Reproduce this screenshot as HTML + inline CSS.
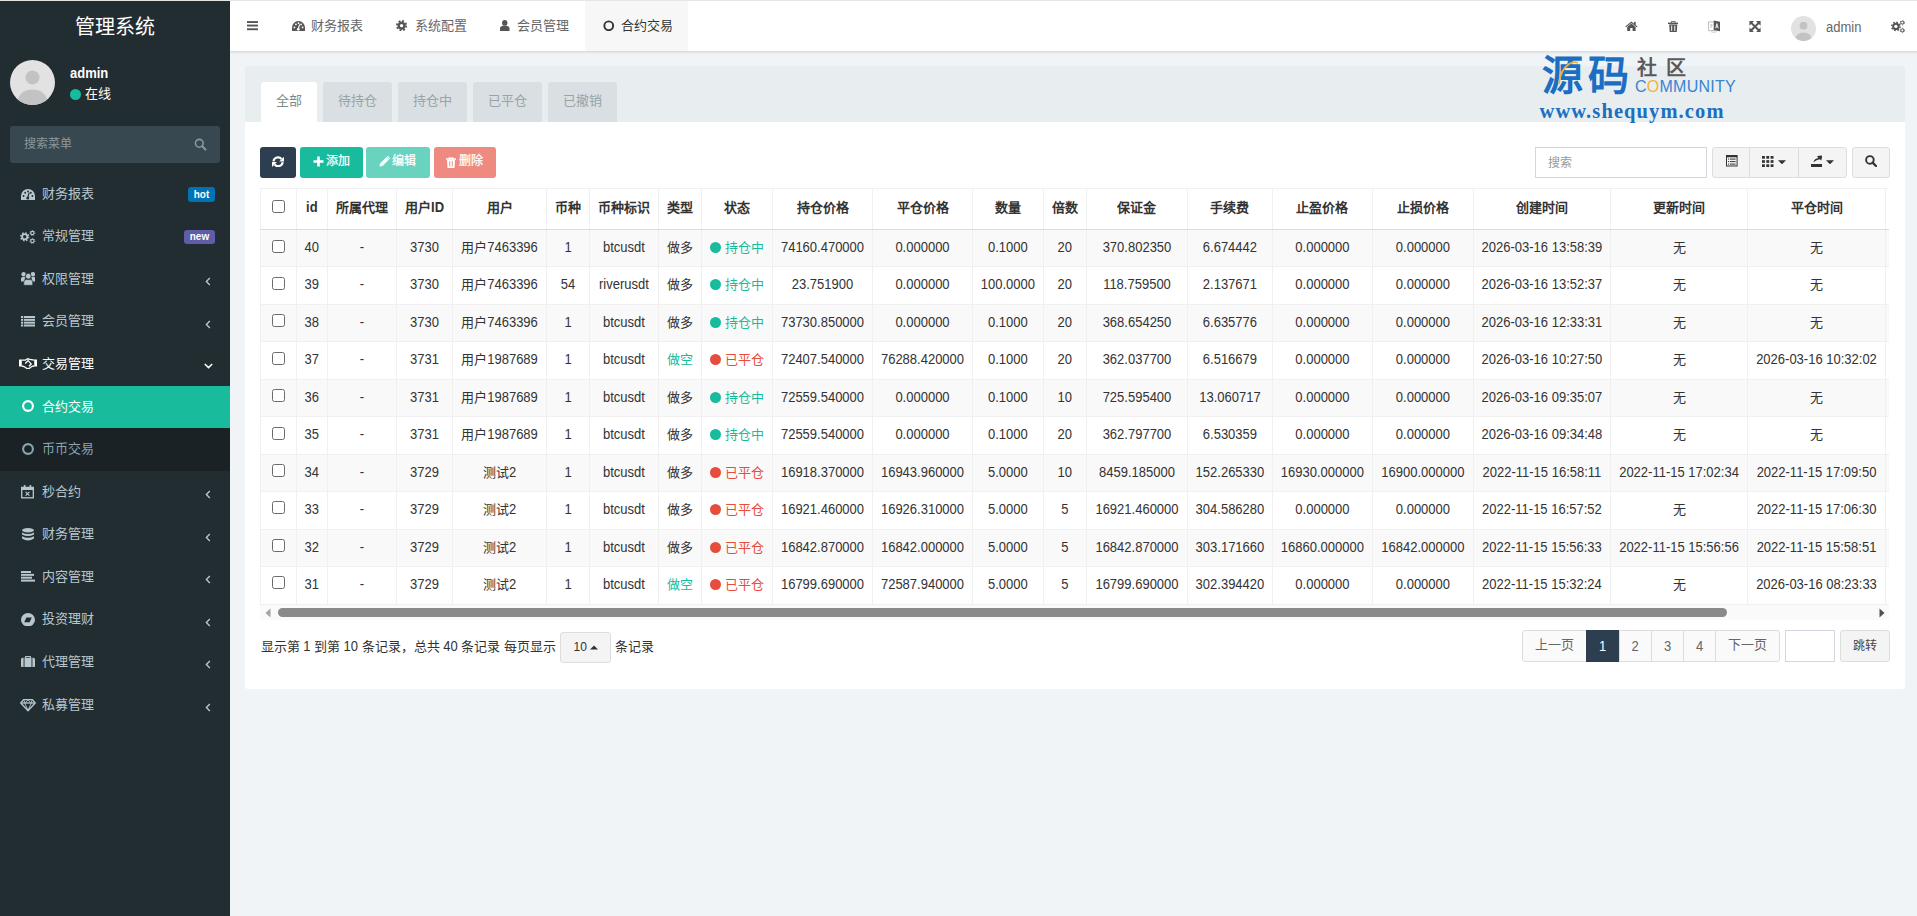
<!DOCTYPE html><html lang="zh-CN"><head><meta charset="utf-8"><style>
*{box-sizing:border-box;margin:0;padding:0}
html,body{width:1917px;height:916px;overflow:hidden}
body{position:relative;background:#f1f4f6;font-family:"Liberation Sans",sans-serif;font-size:13px;color:#333}
.abs{position:absolute}
.tx{position:absolute;white-space:nowrap}
</style></head><body><div class="abs" style="left:0;top:0;width:1917px;height:1px;background:#e4e6e4"></div>
<div class="abs" style="left:0;top:1px;width:230px;height:915px;background:#222d32"></div>
<div class="tx" style="left:0;top:1.5px;width:230px;height:50px;line-height:50px;text-align:center;color:#fff;font-size:20px">管理系统</div>
<svg class="abs" style="left:10px;top:60px" width="45" height="45" viewBox="0 0 45 45"><defs><clipPath id="av"><circle cx="22.5" cy="22.5" r="22.5"/></clipPath></defs><g clip-path="url(#av)"><rect width="45" height="45" fill="#e2e2e2"/><circle cx="22.5" cy="17.5" r="7" fill="#c3c3c3"/><ellipse cx="22.5" cy="40.5" rx="14.5" ry="11" fill="#c3c3c3"/></g></svg>
<div class="tx" style="left:70px;top:65.6px;color:#fff;font-weight:bold;font-size:13px;line-height:16px"><span style="display:inline-block;transform:scaleY(1.1);transform-origin:50% 68%">admin</span></div>
<div class="abs" style="left:70px;top:89px;width:11px;height:11px;border-radius:50%;background:#18bc9c"></div>
<div class="tx" style="left:85px;top:86px;color:#fff;font-size:13px;line-height:16px">在线</div>
<div class="abs" style="left:10px;top:126px;width:210px;height:36.7px;background:#374850;border-radius:3px"></div>
<div class="tx" style="left:24px;top:126.3px;line-height:36px;color:#8b989e;font-size:12px">搜索菜单</div>
<svg class="abs" style="left:194px;top:138px" width="13" height="13" viewBox="0 0 13 13"><circle cx="5.3" cy="5.3" r="3.9" fill="none" stroke="#8b989e" stroke-width="1.6"/><path d="M8.2 8.2 L11.5 11.5" stroke="#8b989e" stroke-width="2" stroke-linecap="round"/></svg>
<svg class="abs" style="left:21px;top:188.88px" width="14" height="11" viewBox="0 0 14 11"><path d="M0 11 L0 7 A7 7 0 0 1 14 7 L14 11 Z" fill="#b8c7ce"/><circle cx="2.6" cy="7" r="0.95" fill="#222d32"/><circle cx="4.2" cy="3.7" r="0.95" fill="#222d32"/><circle cx="7" cy="2.4" r="0.95" fill="#222d32"/><circle cx="9.8" cy="3.7" r="0.95" fill="#222d32"/><circle cx="11.4" cy="7" r="0.95" fill="#222d32"/><path d="M6.6 9.2 L8.2 3.6" stroke="#222d32" stroke-width="1.2"/><circle cx="6.8" cy="9" r="1.5" fill="#222d32"/></svg>
<div class="tx" style="left:42px;top:172.70px;height:42.57px;line-height:42.57px;color:#b8c7ce;font-size:13px">财务报表</div>
<div class="tx" style="left:188px;top:187px;width:27px;height:15px;line-height:15px;border-radius:3px;background:#0073b7;color:#fff;font-weight:bold;font-size:10px;text-align:center"><span style="display:inline-block;transform:scaleY(1.12);transform-origin:50% 68%">hot</span></div>
<svg class="abs" style="left:20.2px;top:229.50px" width="16" height="14.2" viewBox="0 0 16 14.2"><circle cx="4.7" cy="6.8" r="3.48" fill="#b8c7ce"/><circle cx="4.7" cy="6.8" r="3.95" fill="none" stroke="#b8c7ce" stroke-width="1.50" stroke-dasharray="1.550 1.550"/><circle cx="4.7" cy="6.8" r="1.69" fill="#222d32"/><circle cx="12.4" cy="2.95" r="2.18" fill="#b8c7ce"/><circle cx="12.4" cy="2.95" r="2.48" fill="none" stroke="#b8c7ce" stroke-width="0.94" stroke-dasharray="1.112 1.112"/><circle cx="12.4" cy="2.95" r="1.06" fill="#222d32"/><circle cx="12.4" cy="10.9" r="2.18" fill="#b8c7ce"/><circle cx="12.4" cy="10.9" r="2.48" fill="none" stroke="#b8c7ce" stroke-width="0.94" stroke-dasharray="1.112 1.112"/><circle cx="12.4" cy="10.9" r="1.06" fill="#222d32"/></svg>
<div class="tx" style="left:42px;top:215.27px;height:42.57px;line-height:42.57px;color:#b8c7ce;font-size:13px">常规管理</div>
<div class="tx" style="left:184px;top:230px;width:31px;height:14px;line-height:14px;border-radius:3px;background:#605ca8;color:#fff;font-weight:bold;font-size:10px;text-align:center"><span style="display:inline-block;transform:scaleY(1.12);transform-origin:50% 68%">new</span></div>
<svg class="abs" style="left:20.7px;top:272.23px" width="14.5" height="13.3" viewBox="0 0 14.5 13.3"><circle cx="2.6" cy="2.3" r="2.2" fill="#b8c7ce"/><circle cx="11.9" cy="2.3" r="2.2" fill="#b8c7ce"/><path d="M0 9.5 L0 6.5 Q0 5 1.6 5 L4.2 5 L3.2 9.5 Z" fill="#b8c7ce"/><path d="M14.5 9.5 L14.5 6.5 Q14.5 5 12.9 5 L10.3 5 L11.3 9.5 Z" fill="#b8c7ce"/><circle cx="7.25" cy="4.2" r="2.9" fill="#b8c7ce" stroke="#222d32" stroke-width="0.8"/><path d="M2.8 13.3 L2.8 10.2 Q2.8 7.6 5.2 7.6 L9.3 7.6 Q11.7 7.6 11.7 10.2 L11.7 13.3 Z" fill="#b8c7ce" stroke="#222d32" stroke-width="0.6"/></svg>
<div class="tx" style="left:42px;top:257.84px;height:42.57px;line-height:42.57px;color:#b8c7ce;font-size:13px">权限管理</div>
<svg class="abs" style="left:205px;top:277.12px" width="6" height="9" viewBox="0 0 6 9"><path d="M4.8 1 L1.4 4.5 L4.8 8" fill="none" stroke="#b8c7ce" stroke-width="1.4"/></svg>
<svg class="abs" style="left:21px;top:316.00px" width="14" height="10.5" viewBox="0 0 14 10.5"><rect x="0" y="0" width="2.2" height="2" fill="#b8c7ce"/><rect x="3" y="0" width="11" height="2" fill="#b8c7ce"/><rect x="0" y="2.85" width="2.2" height="2" fill="#b8c7ce"/><rect x="3" y="2.85" width="11" height="2" fill="#b8c7ce"/><rect x="0" y="5.7" width="2.2" height="2" fill="#b8c7ce"/><rect x="3" y="5.7" width="11" height="2" fill="#b8c7ce"/><rect x="0" y="8.5" width="2.2" height="2" fill="#b8c7ce"/><rect x="3" y="8.5" width="11" height="2" fill="#b8c7ce"/></svg>
<div class="tx" style="left:42px;top:300.41px;height:42.57px;line-height:42.57px;color:#b8c7ce;font-size:13px">会员管理</div>
<svg class="abs" style="left:205px;top:319.69px" width="6" height="9" viewBox="0 0 6 9"><path d="M4.8 1 L1.4 4.5 L4.8 8" fill="none" stroke="#b8c7ce" stroke-width="1.4"/></svg>
<svg class="abs" style="left:19.2px;top:357.77px" width="18" height="11.5" viewBox="0 0 18 11.5"><rect x="0" y="1.5" width="2.8" height="7" fill="#fff"/><rect x="15.2" y="1.5" width="2.8" height="7" fill="#fff"/><path d="M2.8 2.2 L6.3 2.2 L8.6 0.8 L11 1.4 L15.2 2.2" fill="none" stroke="#fff" stroke-width="1.3"/><path d="M2.8 8 L5 8.5 L8.5 10.9 L10.6 10.2 L13 8.3 L15.2 8" fill="none" stroke="#fff" stroke-width="1.3"/><path d="M6.2 5.5 L9.1 2.6 L12.2 5.9 L10 8.2" fill="none" stroke="#fff" stroke-width="1.3"/></svg>
<div class="tx" style="left:42px;top:342.98px;height:42.57px;line-height:42.57px;color:#fff;font-size:13px">交易管理</div>
<svg class="abs" style="left:203.5px;top:363.47px" width="9" height="6" viewBox="0 0 9 6"><path d="M0.8 1 L4.5 4.6 L8.2 1" fill="none" stroke="#fff" stroke-width="1.5"/></svg>
<div class="abs" style="left:0;top:385.55px;width:230px;height:42.57px;background:#18bc9c"></div>
<svg class="abs" style="left:22px;top:400.23px" width="12" height="12" viewBox="0 0 12 12"><circle cx="6" cy="6" r="4.9" fill="none" stroke="#fff" stroke-width="2.1"/></svg>
<div class="tx" style="left:42px;top:385.55px;height:42.57px;line-height:42.57px;color:#fff;font-size:13px">合约交易</div>
<div class="abs" style="left:0;top:428.12px;width:230px;height:42.57px;background:#1a2226"></div>
<svg class="abs" style="left:22px;top:442.81px" width="12" height="12" viewBox="0 0 12 12"><circle cx="6" cy="6" r="4.9" fill="none" stroke="#8aa4af" stroke-width="2.1"/></svg>
<div class="tx" style="left:42px;top:428.12px;height:42.57px;line-height:42.57px;color:#8aa4af;font-size:13px">币币交易</div>
<svg class="abs" style="left:21px;top:485.28px" width="13" height="13.5" viewBox="0 0 13 13.5"><rect x="0.7" y="2.4" width="11.6" height="10.4" fill="none" stroke="#b8c7ce" stroke-width="1.3"/><rect x="0.7" y="2.4" width="11.6" height="2.6" fill="#b8c7ce"/><rect x="2.8" y="0" width="1.6" height="3" fill="#b8c7ce"/><rect x="8.6" y="0" width="1.6" height="3" fill="#b8c7ce"/><path d="M4.6 6.8 L8.4 10.6 M8.4 6.8 L4.6 10.6" stroke="#b8c7ce" stroke-width="1.2"/></svg>
<div class="tx" style="left:42px;top:470.69px;height:42.57px;line-height:42.57px;color:#b8c7ce;font-size:13px">秒合约</div>
<svg class="abs" style="left:205px;top:489.98px" width="6" height="9" viewBox="0 0 6 9"><path d="M4.8 1 L1.4 4.5 L4.8 8" fill="none" stroke="#b8c7ce" stroke-width="1.4"/></svg>
<svg class="abs" style="left:21.9px;top:528.14px" width="12" height="13.4" viewBox="0 0 12 13.4"><ellipse cx="6" cy="2.2" rx="6" ry="2.2" fill="#b8c7ce"/><path d="M0 4.6 Q6 7.6 12 4.6 L12 6.6 Q6 9.6 0 6.6 Z" fill="#b8c7ce"/><path d="M0 8.2 Q6 11.2 12 8.2 L12 10.6 Q6 14.6 0 10.6 Z" fill="#b8c7ce"/></svg>
<div class="tx" style="left:42px;top:513.26px;height:42.57px;line-height:42.57px;color:#b8c7ce;font-size:13px">财务管理</div>
<svg class="abs" style="left:205px;top:532.54px" width="6" height="9" viewBox="0 0 6 9"><path d="M4.8 1 L1.4 4.5 L4.8 8" fill="none" stroke="#b8c7ce" stroke-width="1.4"/></svg>
<svg class="abs" style="left:21px;top:571.11px" width="14" height="10.6" viewBox="0 0 14 10.6"><rect x="0" y="0" width="10" height="2" fill="#b8c7ce"/><rect x="0" y="2.85" width="13" height="2" fill="#b8c7ce"/><rect x="0" y="5.7" width="11" height="2" fill="#b8c7ce"/><rect x="0" y="8.6" width="14" height="2" fill="#b8c7ce"/></svg>
<div class="tx" style="left:42px;top:555.83px;height:42.57px;line-height:42.57px;color:#b8c7ce;font-size:13px">内容管理</div>
<svg class="abs" style="left:205px;top:575.11px" width="6" height="9" viewBox="0 0 6 9"><path d="M4.8 1 L1.4 4.5 L4.8 8" fill="none" stroke="#b8c7ce" stroke-width="1.4"/></svg>
<svg class="abs" style="left:21px;top:613.08px" width="14" height="13.4" viewBox="0 0 14 13.4"><ellipse cx="7" cy="6.7" rx="7" ry="6.7" fill="#b8c7ce"/><path d="M3.2 9.2 L5.4 4.4 L10.8 4.4 L8.6 9.2 Z" fill="#222d32"/></svg>
<div class="tx" style="left:42px;top:598.40px;height:42.57px;line-height:42.57px;color:#b8c7ce;font-size:13px">投资理财</div>
<svg class="abs" style="left:205px;top:617.68px" width="6" height="9" viewBox="0 0 6 9"><path d="M4.8 1 L1.4 4.5 L4.8 8" fill="none" stroke="#b8c7ce" stroke-width="1.4"/></svg>
<svg class="abs" style="left:21px;top:656.05px" width="14" height="11.3" viewBox="0 0 14 11.3"><rect x="0" y="1.8" width="14" height="9.5" rx="1.6" fill="#b8c7ce"/><rect x="4.6" y="0.5" width="4.8" height="2" fill="none" stroke="#b8c7ce" stroke-width="1"/><rect x="2.6" y="1.8" width="0.9" height="9.5" fill="#222d32"/><rect x="10.5" y="1.8" width="0.9" height="9.5" fill="#222d32"/></svg>
<div class="tx" style="left:42px;top:640.97px;height:42.57px;line-height:42.57px;color:#b8c7ce;font-size:13px">代理管理</div>
<svg class="abs" style="left:205px;top:660.25px" width="6" height="9" viewBox="0 0 6 9"><path d="M4.8 1 L1.4 4.5 L4.8 8" fill="none" stroke="#b8c7ce" stroke-width="1.4"/></svg>
<svg class="abs" style="left:20px;top:698.92px" width="16" height="12.6" viewBox="0 0 16 12.6"><path d="M0.8 4 L3.6 0.7 L12.4 0.7 L15.2 4 L8 11.8 Z" fill="none" stroke="#b8c7ce" stroke-width="1.3" stroke-linejoin="round"/><path d="M0.8 4 L15.2 4" stroke="#b8c7ce" stroke-width="1.3"/><path d="M4.6 4 L8 11.3 L11.4 4 M3.6 0.7 L5 4 L8 0.9 L11 4 L12.4 0.7" fill="none" stroke="#b8c7ce" stroke-width="0.9"/></svg>
<div class="tx" style="left:42px;top:683.54px;height:42.57px;line-height:42.57px;color:#b8c7ce;font-size:13px">私募管理</div>
<svg class="abs" style="left:205px;top:702.82px" width="6" height="9" viewBox="0 0 6 9"><path d="M4.8 1 L1.4 4.5 L4.8 8" fill="none" stroke="#b8c7ce" stroke-width="1.4"/></svg>
<div class="abs" style="left:230px;top:1px;width:1687px;height:50px;background:#fff"></div>
<div class="abs" style="left:230px;top:51px;width:1687px;height:1px;background:#d9dde1"></div>
<div class="abs" style="left:230px;top:52px;width:1687px;height:1px;background:#e4e8eb"></div>
<div class="abs" style="left:230px;top:53px;width:1687px;height:1px;background:#eaeef1"></div>
<div class="abs" style="left:585px;top:1px;width:103px;height:50px;background:#f7f7f7"></div>
<svg class="abs" style="left:247px;top:20.8px" width="11.3" height="10" viewBox="0 0 11.3 10"><rect x="0" y="0.1" width="11.3" height="1.9" fill="#555"/><rect x="0" y="3.6" width="11.3" height="1.9" fill="#555"/><rect x="0" y="7.3" width="11.3" height="1.9" fill="#555"/></svg>
<svg class="abs" style="left:291.8px;top:20.8px" width="13" height="10.2" viewBox="0 0 14 11"><path d="M0 11 L0 7 A7 7 0 0 1 14 7 L14 11 Z" fill="#555"/><circle cx="2.6" cy="7" r="0.95" fill="#fff"/><circle cx="4.2" cy="3.7" r="0.95" fill="#fff"/><circle cx="7" cy="2.4" r="0.95" fill="#fff"/><circle cx="9.8" cy="3.7" r="0.95" fill="#fff"/><circle cx="11.4" cy="7" r="0.95" fill="#fff"/><path d="M6.6 9.2 L8.2 3.6" stroke="#fff" stroke-width="1.2"/><circle cx="6.8" cy="9" r="1.5" fill="#fff"/></svg>
<svg class="abs" style="left:396.1px;top:19.7px" width="11.2" height="11.3" viewBox="0 0 12 12"><circle cx="6" cy="6" r="4.44" fill="#555"/><circle cx="6" cy="6" r="5.04" fill="none" stroke="#555" stroke-width="1.92" stroke-dasharray="1.979 1.979"/><circle cx="6" cy="6" r="1.80" fill="#fff"/></svg>
<svg class="abs" style="left:500.3px;top:20px" width="9.5" height="11" viewBox="0 0 9.5 11"><ellipse cx="4.75" cy="2.9" rx="2.7" ry="2.9" fill="#555"/><path d="M0 11 L0 8.6 Q0 5.9 2.6 5.9 L6.9 5.9 Q9.5 5.9 9.5 8.6 L9.5 11 Z" fill="#555"/></svg>
<svg class="abs" style="left:603px;top:19.8px" width="11.5" height="11.5" viewBox="0 0 12 12"><circle cx="6" cy="6" r="4.6" fill="none" stroke="#333" stroke-width="2"/></svg>
<div class="tx" style="left:310.5px;top:1px;line-height:49px;color:#666;font-size:13px">财务报表</div>
<div class="tx" style="left:414.7px;top:1px;line-height:49px;color:#666;font-size:13px">系统配置</div>
<div class="tx" style="left:517px;top:1px;line-height:49px;color:#666;font-size:13px">会员管理</div>
<div class="tx" style="left:621px;top:1px;line-height:49px;color:#333;font-size:13px">合约交易</div>
<svg class="abs" style="left:1625px;top:20.8px" width="12.8" height="10.2" viewBox="0 0 13 10.4"><path d="M0.2 5.6 L6.5 0.4 L12.8 5.6 L12 6.5 L6.5 2 L1 6.5 Z" fill="#555"/><path d="M2.2 6 L6.5 2.6 L10.8 6 L10.8 10.4 L7.7 10.4 L7.7 7.2 L5.3 7.2 L5.3 10.4 L2.2 10.4 Z" fill="#555"/><rect x="9.2" y="0.8" width="1.7" height="3" fill="#555"/></svg>
<svg class="abs" style="left:1667.8px;top:20.8px" width="10.5" height="11.2" viewBox="0 0 10.5 11.2"><rect x="0" y="1.6" width="10.5" height="1.5" fill="#555"/><path d="M3.4 1.8 L3.4 0.4 L7.1 0.4 L7.1 1.8" fill="none" stroke="#555" stroke-width="0.9"/><path d="M1.2 3.4 L9.3 3.4 L8.8 11.2 L1.7 11.2 Z" fill="#555"/><rect x="3.2" y="4.6" width="1" height="5.3" fill="#fff"/><rect x="6.3" y="4.6" width="1" height="5.3" fill="#fff"/></svg>
<svg class="abs" style="left:1707.8px;top:20px" width="12.5" height="12.5" viewBox="0 0 13 13"><path d="M0.5 2 L6.5 2 L6.5 11 L0.5 11 Z" fill="none" stroke="#aaa" stroke-width="0.8"/><path d="M6 0.6 L12.5 1.8 L12.5 11.6 L6 10.6 Z" fill="#555"/><path d="M8 8.6 L9.2 3.8 L10.6 8.6 M8.4 7.2 L10.2 7.2" fill="none" stroke="#fff" stroke-width="0.9"/><path d="M2 5 L4.8 5 M3.3 4 L3.3 8 M2 8 L4.8 6" stroke="#bbb" stroke-width="0.7"/><path d="M3 12.2 Q6 13.4 9 12.2" fill="none" stroke="#bbb" stroke-width="0.8"/></svg>
<svg class="abs" style="left:1749px;top:20.9px" width="12" height="11.2" viewBox="0 0 12 12"><path d="M2 2 L10 10 M10 2 L2 10" stroke="#555" stroke-width="2.2"/><path d="M0 0 L5 0 L0 5 Z M12 0 L12 5 L7 0 Z M0 12 L0 7 L5 12 Z M12 12 L7 12 L12 7 Z" fill="#555"/></svg>
<svg class="abs" style="left:1791px;top:16px" width="25" height="25" viewBox="0 0 45 45"><defs><clipPath id="av2"><circle cx="22.5" cy="22.5" r="22.5"/></clipPath></defs><g clip-path="url(#av2)"><rect width="45" height="45" fill="#e2e2e2"/><circle cx="22.5" cy="17.5" r="7" fill="#c3c3c3"/><ellipse cx="22.5" cy="40.5" rx="14.5" ry="11" fill="#c3c3c3"/></g></svg>
<div class="tx" style="left:1826px;top:3.8px;line-height:50px;color:#666;font-size:13px"><span style="display:inline-block;transform:scaleY(1.14);transform-origin:50% 68%">admin</span></div>
<svg class="abs" style="left:1891px;top:20px" width="14" height="13" viewBox="0 0 14 13"><circle cx="4.9" cy="6.4" r="3.63" fill="#555"/><circle cx="4.9" cy="6.4" r="4.12" fill="none" stroke="#555" stroke-width="1.57" stroke-dasharray="1.616 1.616"/><circle cx="4.9" cy="6.4" r="1.67" fill="#fff"/><circle cx="11.3" cy="2.6" r="1.92" fill="#555"/><circle cx="11.3" cy="2.6" r="2.18" fill="none" stroke="#555" stroke-width="0.83" stroke-dasharray="1.144 1.144"/><circle cx="11.3" cy="2.6" r="1.04" fill="#fff"/><circle cx="11.3" cy="10.4" r="1.92" fill="#555"/><circle cx="11.3" cy="10.4" r="2.18" fill="none" stroke="#555" stroke-width="0.83" stroke-dasharray="1.144 1.144"/><circle cx="11.3" cy="10.4" r="1.04" fill="#fff"/></svg>
<div class="abs" style="left:245px;top:66px;width:1660px;height:623px;background:#fff;border-radius:3px"></div>
<div class="abs" style="left:245px;top:66px;width:1660px;height:56px;background:#e8edf0;border-radius:3px 3px 0 0"></div>
<div class="tx" style="left:261px;top:81.6px;width:56px;height:40.4px;line-height:38px;text-align:center;background:#fff;color:#7b8a8b;font-size:13px;border-radius:3px 3px 0 0">全部</div>
<div class="tx" style="left:323px;top:81.6px;width:69px;height:40.4px;line-height:38px;text-align:center;background:#d9dfe3;color:#98a4a6;font-size:13px;border-radius:3px 3px 0 0">待持仓</div>
<div class="tx" style="left:398px;top:81.6px;width:69px;height:40.4px;line-height:38px;text-align:center;background:#d9dfe3;color:#98a4a6;font-size:13px;border-radius:3px 3px 0 0">持仓中</div>
<div class="tx" style="left:473px;top:81.6px;width:69px;height:40.4px;line-height:38px;text-align:center;background:#d9dfe3;color:#98a4a6;font-size:13px;border-radius:3px 3px 0 0">已平仓</div>
<div class="tx" style="left:548px;top:81.6px;width:69px;height:40.4px;line-height:38px;text-align:center;background:#d9dfe3;color:#98a4a6;font-size:13px;border-radius:3px 3px 0 0">已撤销</div>
<div class="abs" style="left:260px;top:147px;width:36px;height:31px;background:#2c3e50;border-radius:3px"></div>
<div class="tx" style="left:260px;top:146.4px;width:36px;height:31px;color:#fff;font-size:12px;line-height:31px;-webkit-text-stroke:0.25px #fff"></div>
<svg class="abs" style="left:272.2px;top:155.6px" width="12.2" height="11.6" viewBox="0 0 12.2 11.6"><path d="M1.5 5.4 A4.5 4.5 0 0 1 9.6 3.2" fill="none" stroke="#fff" stroke-width="2.1"/><path d="M12.2 0.6 L12.2 5.5 L7.3 5.5 Z" fill="#fff"/><path d="M10.7 6.2 A4.5 4.5 0 0 1 2.6 8.4" fill="none" stroke="#fff" stroke-width="2.1"/><path d="M0 11 L0 6.1 L4.9 6.1 Z" fill="#fff"/></svg>
<div class="abs" style="left:300px;top:147px;width:62.6px;height:31px;background:#18bc9c;border-radius:3px"></div>
<div class="tx" style="left:300px;top:146.4px;width:62.6px;height:31px;color:#fff;font-size:12px;line-height:31px;-webkit-text-stroke:0.25px #fff"><span class="abs" style="left:26px;top:0">添加</span></div>
<svg class="abs" style="left:312.5px;top:156.2px" width="11" height="11" viewBox="0 0 11 11"><path d="M4.2 0.5 H6.8 V4.2 H10.5 V6.8 H6.8 V10.5 H4.2 V6.8 H0.5 V4.2 H4.2 Z" fill="#fff"/></svg>
<div class="abs" style="left:366.2px;top:147px;width:63.4px;height:31px;background:#69d3bf;border-radius:3px"></div>
<div class="tx" style="left:366.2px;top:146.4px;width:63.4px;height:31px;color:#fff;font-size:12px;line-height:31px;-webkit-text-stroke:0.25px #fff"><span class="abs" style="left:25.5px;top:0">编辑</span></div>
<svg class="abs" style="left:378.6px;top:156.3px" width="11" height="11" viewBox="0 0 11 11"><path d="M0.5 10.5 L1 7.5 L7.5 1 L10 3.5 L3.5 10 Z" fill="#fff"/><path d="M8.3 0.3 L10.7 2.7" stroke="#fff" stroke-width="1.3"/></svg>
<div class="abs" style="left:434px;top:147px;width:61.6px;height:31px;background:#ef8a80;border-radius:3px"></div>
<div class="tx" style="left:434px;top:146.4px;width:61.6px;height:31px;color:#fff;font-size:12px;line-height:31px;-webkit-text-stroke:0.25px #fff"><span class="abs" style="left:24.5px;top:0">删除</span></div>
<svg class="abs" style="left:446px;top:156.5px" width="10" height="11" viewBox="0 0 10 11"><rect x="0" y="1.3" width="10" height="1.5" fill="#fff"/><rect x="3.2" y="0" width="3.6" height="1.8" fill="none" stroke="#fff" stroke-width="0.9"/><path d="M1 3 H9 L8.5 11 H1.5 Z" fill="#fff"/><rect x="3.3" y="4" width="0.9" height="5.5" fill="#ef8a80"/><rect x="5.8" y="4" width="0.9" height="5.5" fill="#ef8a80"/></svg>
<div class="abs" style="left:1535px;top:147px;width:172px;height:30.5px;border:1px solid #d2d6de;background:#fff"></div>
<div class="tx" style="left:1548px;top:148px;line-height:30px;color:#999;font-size:12px">搜索</div>
<div class="abs" style="left:1712px;top:147px;width:134.5px;height:30.5px;border:1px solid #ddd;background:#f4f4f4;border-radius:3px"></div>
<div class="abs" style="left:1749px;top:147px;width:1px;height:30.5px;background:#ddd"></div>
<div class="abs" style="left:1798px;top:147px;width:1px;height:30.5px;background:#ddd"></div>
<div class="abs" style="left:1852px;top:147px;width:37.5px;height:30.5px;border:1px solid #ddd;background:#f4f4f4;border-radius:3px"></div>
<svg class="abs" style="left:1726px;top:155.1px" width="11.6" height="11.5" viewBox="0 0 11.6 11.5"><rect x="0.5" y="0.5" width="10.6" height="10.5" fill="none" stroke="#333" stroke-width="1"/><rect x="0.5" y="0.5" width="10.6" height="1.8" fill="#333"/><rect x="2" y="3.6" width="1.2" height="1" fill="#333"/><rect x="4" y="3.6" width="5.6" height="1" fill="#333"/><rect x="2" y="6.1" width="1.2" height="1" fill="#333"/><rect x="4" y="6.1" width="5.6" height="1" fill="#333"/><rect x="2" y="8.6" width="1.2" height="1" fill="#333"/><rect x="4" y="8.6" width="5.6" height="1" fill="#333"/></svg>
<svg class="abs" style="left:1762px;top:156.1px" width="11.5" height="11" viewBox="0 0 11.5 11"><rect x="0" y="0" width="2.9" height="2.7" fill="#333"/><rect x="0" y="4.15" width="2.9" height="2.7" fill="#333"/><rect x="0" y="8.3" width="2.9" height="2.7" fill="#333"/><rect x="4.3" y="0" width="2.9" height="2.7" fill="#333"/><rect x="4.3" y="4.15" width="2.9" height="2.7" fill="#333"/><rect x="4.3" y="8.3" width="2.9" height="2.7" fill="#333"/><rect x="8.6" y="0" width="2.9" height="2.7" fill="#333"/><rect x="8.6" y="4.15" width="2.9" height="2.7" fill="#333"/><rect x="8.6" y="8.3" width="2.9" height="2.7" fill="#333"/></svg>
<svg class="abs" style="left:1778.2px;top:159.8px" width="8" height="4.5" viewBox="0 0 8 4.5"><path d="M0 0.2 L8 0.2 L4 4.3 Z" fill="#333"/></svg>
<svg class="abs" style="left:1810.6px;top:155.1px" width="11.5" height="12" viewBox="0 0 11.5 12"><rect x="0" y="9" width="11.5" height="3" fill="#333"/><path d="M2.4 7.2 Q3.5 3.5 7.2 3.3 L6.2 1 L11.3 0.4 L10.3 5.6 L8.6 4.2 Q5.6 4.8 2.4 7.2 Z" fill="#333"/></svg>
<svg class="abs" style="left:1826.3px;top:159.8px" width="8" height="4.5" viewBox="0 0 8 4.5"><path d="M0 0.2 L8 0.2 L4 4.3 Z" fill="#333"/></svg>
<svg class="abs" style="left:1865px;top:155.1px" width="12" height="12" viewBox="0 0 12 12"><circle cx="4.9" cy="4.9" r="3.8" fill="none" stroke="#333" stroke-width="1.9"/><path d="M7.6 7.6 L11 11" stroke="#333" stroke-width="2.3" stroke-linecap="round"/></svg>
<div class="abs" style="left:260px;top:188px;width:1629.3px;height:416.5px;overflow:hidden"><div class="abs" style="left:0;top:42.15px;width:1800px;height:35.85px;background:#f9f9f9"></div><div class="abs" style="left:0;top:79.00px;width:1800px;height:36.56px;background:#fff"></div><div class="abs" style="left:0;top:116.56px;width:1800px;height:36.56px;background:#f9f9f9"></div><div class="abs" style="left:0;top:154.12px;width:1800px;height:36.56px;background:#fff"></div><div class="abs" style="left:0;top:191.68px;width:1800px;height:36.56px;background:#f9f9f9"></div><div class="abs" style="left:0;top:229.24px;width:1800px;height:36.56px;background:#fff"></div><div class="abs" style="left:0;top:266.80px;width:1800px;height:36.56px;background:#f9f9f9"></div><div class="abs" style="left:0;top:304.36px;width:1800px;height:36.56px;background:#fff"></div><div class="abs" style="left:0;top:341.92px;width:1800px;height:36.56px;background:#f9f9f9"></div><div class="abs" style="left:0;top:379.48px;width:1800px;height:36.56px;background:#fff"></div><div class="abs" style="left:0;top:0;width:1800px;height:1px;background:#f0f0f0"></div><div class="abs" style="left:0;top:78.00px;width:1800px;height:1px;background:#f0f0f0"></div><div class="abs" style="left:0;top:115.56px;width:1800px;height:1px;background:#f0f0f0"></div><div class="abs" style="left:0;top:153.12px;width:1800px;height:1px;background:#f0f0f0"></div><div class="abs" style="left:0;top:190.68px;width:1800px;height:1px;background:#f0f0f0"></div><div class="abs" style="left:0;top:228.24px;width:1800px;height:1px;background:#f0f0f0"></div><div class="abs" style="left:0;top:265.80px;width:1800px;height:1px;background:#f0f0f0"></div><div class="abs" style="left:0;top:303.36px;width:1800px;height:1px;background:#f0f0f0"></div><div class="abs" style="left:0;top:340.92px;width:1800px;height:1px;background:#f0f0f0"></div><div class="abs" style="left:0;top:378.48px;width:1800px;height:1px;background:#f0f0f0"></div><div class="abs" style="left:0;top:416.04px;width:1800px;height:1px;background:#f0f0f0"></div><div class="abs" style="left:-0.50px;top:0;width:1px;height:420px;background:#f0f0f0"></div><div class="abs" style="left:35.80px;top:0;width:1px;height:420px;background:#f0f0f0"></div><div class="abs" style="left:66.90px;top:0;width:1px;height:420px;background:#f0f0f0"></div><div class="abs" style="left:136.00px;top:0;width:1px;height:420px;background:#f0f0f0"></div><div class="abs" style="left:192.10px;top:0;width:1px;height:420px;background:#f0f0f0"></div><div class="abs" style="left:286.00px;top:0;width:1px;height:420px;background:#f0f0f0"></div><div class="abs" style="left:329.00px;top:0;width:1px;height:420px;background:#f0f0f0"></div><div class="abs" style="left:397.90px;top:0;width:1px;height:420px;background:#f0f0f0"></div><div class="abs" style="left:441.00px;top:0;width:1px;height:420px;background:#f0f0f0"></div><div class="abs" style="left:512.00px;top:0;width:1px;height:420px;background:#f0f0f0"></div><div class="abs" style="left:612.00px;top:0;width:1px;height:420px;background:#f0f0f0"></div><div class="abs" style="left:712.00px;top:0;width:1px;height:420px;background:#f0f0f0"></div><div class="abs" style="left:782.80px;top:0;width:1px;height:420px;background:#f0f0f0"></div><div class="abs" style="left:825.90px;top:0;width:1px;height:420px;background:#f0f0f0"></div><div class="abs" style="left:927.10px;top:0;width:1px;height:420px;background:#f0f0f0"></div><div class="abs" style="left:1011.80px;top:0;width:1px;height:420px;background:#f0f0f0"></div><div class="abs" style="left:1112.10px;top:0;width:1px;height:420px;background:#f0f0f0"></div><div class="abs" style="left:1212.80px;top:0;width:1px;height:420px;background:#f0f0f0"></div><div class="abs" style="left:1350.10px;top:0;width:1px;height:420px;background:#f0f0f0"></div><div class="abs" style="left:1487.00px;top:0;width:1px;height:420px;background:#f0f0f0"></div><div class="abs" style="left:1625.00px;top:0;width:1px;height:420px;background:#f0f0f0"></div><div class="abs" style="left:1725.00px;top:0;width:1px;height:420px;background:#f0f0f0"></div><div class="abs" style="left:0;top:40.70px;width:1800px;height:1.45px;background:#dcdcdc"></div><div class="abs" style="left:12.199999999999989px;top:12.00px;width:13px;height:13px;border:1.3px solid #6b6b6b;border-radius:2.5px;background:#fff"></div><div class="tx" style="left:36.30px;top:-0.20px;width:31.10px;height:40.20px;line-height:40.20px;text-align:center;font-weight:bold;color:#333"><span style="display:inline-block;transform:scaleY(1.1);transform-origin:50% 68%">id</span></div><div class="tx" style="left:67.40px;top:-0.20px;width:69.10px;height:40.20px;line-height:40.20px;text-align:center;font-weight:bold;color:#333">所属代理</div><div class="tx" style="left:136.50px;top:-0.20px;width:56.10px;height:40.20px;line-height:40.20px;text-align:center;font-weight:bold;color:#333">用户<span style="display:inline-block;transform:scaleY(1.1);transform-origin:50% 68%">ID</span></div><div class="tx" style="left:192.60px;top:-0.20px;width:93.90px;height:40.20px;line-height:40.20px;text-align:center;font-weight:bold;color:#333">用户</div><div class="tx" style="left:286.50px;top:-0.20px;width:43.00px;height:40.20px;line-height:40.20px;text-align:center;font-weight:bold;color:#333">币种</div><div class="tx" style="left:329.50px;top:-0.20px;width:68.90px;height:40.20px;line-height:40.20px;text-align:center;font-weight:bold;color:#333">币种标识</div><div class="tx" style="left:398.40px;top:-0.20px;width:43.10px;height:40.20px;line-height:40.20px;text-align:center;font-weight:bold;color:#333">类型</div><div class="tx" style="left:441.50px;top:-0.20px;width:71.00px;height:40.20px;line-height:40.20px;text-align:center;font-weight:bold;color:#333">状态</div><div class="tx" style="left:512.50px;top:-0.20px;width:100.00px;height:40.20px;line-height:40.20px;text-align:center;font-weight:bold;color:#333">持仓价格</div><div class="tx" style="left:612.50px;top:-0.20px;width:100.00px;height:40.20px;line-height:40.20px;text-align:center;font-weight:bold;color:#333">平仓价格</div><div class="tx" style="left:712.50px;top:-0.20px;width:70.80px;height:40.20px;line-height:40.20px;text-align:center;font-weight:bold;color:#333">数量</div><div class="tx" style="left:783.30px;top:-0.20px;width:43.10px;height:40.20px;line-height:40.20px;text-align:center;font-weight:bold;color:#333">倍数</div><div class="tx" style="left:826.40px;top:-0.20px;width:101.20px;height:40.20px;line-height:40.20px;text-align:center;font-weight:bold;color:#333">保证金</div><div class="tx" style="left:927.60px;top:-0.20px;width:84.70px;height:40.20px;line-height:40.20px;text-align:center;font-weight:bold;color:#333">手续费</div><div class="tx" style="left:1012.30px;top:-0.20px;width:100.30px;height:40.20px;line-height:40.20px;text-align:center;font-weight:bold;color:#333">止盈价格</div><div class="tx" style="left:1112.60px;top:-0.20px;width:100.70px;height:40.20px;line-height:40.20px;text-align:center;font-weight:bold;color:#333">止损价格</div><div class="tx" style="left:1213.30px;top:-0.20px;width:137.30px;height:40.20px;line-height:40.20px;text-align:center;font-weight:bold;color:#333">创建时间</div><div class="tx" style="left:1350.60px;top:-0.20px;width:136.90px;height:40.20px;line-height:40.20px;text-align:center;font-weight:bold;color:#333">更新时间</div><div class="tx" style="left:1487.50px;top:-0.20px;width:138.00px;height:40.20px;line-height:40.20px;text-align:center;font-weight:bold;color:#333">平仓时间</div><div class="tx" style="left:1625.50px;top:-0.20px;width:100.00px;height:40.20px;line-height:40.20px;text-align:center;font-weight:bold;color:#333">操作</div><div class="abs" style="left:12.199999999999989px;top:51.50px;width:13px;height:13px;border:1.3px solid #6b6b6b;border-radius:2.5px;background:#fff"></div><div class="tx" style="left:36.30px;top:40.85px;width:31.10px;height:37.45px;line-height:37.45px;text-align:center;color:#333"><span style="display:inline-block;transform:scaleY(1.14);transform-origin:50% 68%">40</span></div><div class="tx" style="left:67.40px;top:40.85px;width:69.10px;height:37.45px;line-height:37.45px;text-align:center;color:#333"><span style="display:inline-block;transform:scaleY(1.14);transform-origin:50% 68%">-</span></div><div class="tx" style="left:136.50px;top:40.85px;width:56.10px;height:37.45px;line-height:37.45px;text-align:center;color:#333"><span style="display:inline-block;transform:scaleY(1.14);transform-origin:50% 68%">3730</span></div><div class="tx" style="left:192.60px;top:40.85px;width:93.90px;height:37.45px;line-height:37.45px;text-align:center;color:#333">用户<span style="display:inline-block;transform:scaleY(1.14);transform-origin:50% 68%">7463396</span></div><div class="tx" style="left:286.50px;top:40.85px;width:43.00px;height:37.45px;line-height:37.45px;text-align:center;color:#333"><span style="display:inline-block;transform:scaleY(1.14);transform-origin:50% 68%">1</span></div><div class="tx" style="left:329.50px;top:40.85px;width:68.90px;height:37.45px;line-height:37.45px;text-align:center;color:#333"><span style="display:inline-block;transform:scaleY(1.14);transform-origin:50% 68%">btcusdt</span></div><div class="tx" style="left:398.40px;top:40.85px;width:43.10px;height:37.45px;line-height:37.45px;text-align:center;color:#333">做多</div><div class="tx" style="left:441.50px;top:40.85px;width:71.00px;height:37.45px;line-height:37.45px;text-align:center;color:#18bc9c"><span style="display:inline-block;width:11px;height:11px;border-radius:50%;background:#18bc9c;vertical-align:-1px;margin-right:4px"></span>持仓中</div><div class="tx" style="left:512.50px;top:40.85px;width:100.00px;height:37.45px;line-height:37.45px;text-align:center;color:#333"><span style="display:inline-block;transform:scaleY(1.14);transform-origin:50% 68%">74160.470000</span></div><div class="tx" style="left:612.50px;top:40.85px;width:100.00px;height:37.45px;line-height:37.45px;text-align:center;color:#333"><span style="display:inline-block;transform:scaleY(1.14);transform-origin:50% 68%">0.000000</span></div><div class="tx" style="left:712.50px;top:40.85px;width:70.80px;height:37.45px;line-height:37.45px;text-align:center;color:#333"><span style="display:inline-block;transform:scaleY(1.14);transform-origin:50% 68%">0.1000</span></div><div class="tx" style="left:783.30px;top:40.85px;width:43.10px;height:37.45px;line-height:37.45px;text-align:center;color:#333"><span style="display:inline-block;transform:scaleY(1.14);transform-origin:50% 68%">20</span></div><div class="tx" style="left:826.40px;top:40.85px;width:101.20px;height:37.45px;line-height:37.45px;text-align:center;color:#333"><span style="display:inline-block;transform:scaleY(1.14);transform-origin:50% 68%">370.802350</span></div><div class="tx" style="left:927.60px;top:40.85px;width:84.70px;height:37.45px;line-height:37.45px;text-align:center;color:#333"><span style="display:inline-block;transform:scaleY(1.14);transform-origin:50% 68%">6.674442</span></div><div class="tx" style="left:1012.30px;top:40.85px;width:100.30px;height:37.45px;line-height:37.45px;text-align:center;color:#333"><span style="display:inline-block;transform:scaleY(1.14);transform-origin:50% 68%">0.000000</span></div><div class="tx" style="left:1112.60px;top:40.85px;width:100.70px;height:37.45px;line-height:37.45px;text-align:center;color:#333"><span style="display:inline-block;transform:scaleY(1.14);transform-origin:50% 68%">0.000000</span></div><div class="tx" style="left:1213.30px;top:40.85px;width:137.30px;height:37.45px;line-height:37.45px;text-align:center;color:#333"><span style="display:inline-block;transform:scaleY(1.14);transform-origin:50% 68%">2026-03-16 13:58:39</span></div><div class="tx" style="left:1350.60px;top:40.85px;width:136.90px;height:37.45px;line-height:37.45px;text-align:center;color:#333">无</div><div class="tx" style="left:1487.50px;top:40.85px;width:138.00px;height:37.45px;line-height:37.45px;text-align:center;color:#333">无</div><div class="abs" style="left:12.199999999999989px;top:88.92px;width:13px;height:13px;border:1.3px solid #6b6b6b;border-radius:2.5px;background:#fff"></div><div class="tx" style="left:36.30px;top:78.33px;width:31.10px;height:37.45px;line-height:37.45px;text-align:center;color:#333"><span style="display:inline-block;transform:scaleY(1.14);transform-origin:50% 68%">39</span></div><div class="tx" style="left:67.40px;top:78.33px;width:69.10px;height:37.45px;line-height:37.45px;text-align:center;color:#333"><span style="display:inline-block;transform:scaleY(1.14);transform-origin:50% 68%">-</span></div><div class="tx" style="left:136.50px;top:78.33px;width:56.10px;height:37.45px;line-height:37.45px;text-align:center;color:#333"><span style="display:inline-block;transform:scaleY(1.14);transform-origin:50% 68%">3730</span></div><div class="tx" style="left:192.60px;top:78.33px;width:93.90px;height:37.45px;line-height:37.45px;text-align:center;color:#333">用户<span style="display:inline-block;transform:scaleY(1.14);transform-origin:50% 68%">7463396</span></div><div class="tx" style="left:286.50px;top:78.33px;width:43.00px;height:37.45px;line-height:37.45px;text-align:center;color:#333"><span style="display:inline-block;transform:scaleY(1.14);transform-origin:50% 68%">54</span></div><div class="tx" style="left:329.50px;top:78.33px;width:68.90px;height:37.45px;line-height:37.45px;text-align:center;color:#333"><span style="display:inline-block;transform:scaleY(1.14);transform-origin:50% 68%">riverusdt</span></div><div class="tx" style="left:398.40px;top:78.33px;width:43.10px;height:37.45px;line-height:37.45px;text-align:center;color:#333">做多</div><div class="tx" style="left:441.50px;top:78.33px;width:71.00px;height:37.45px;line-height:37.45px;text-align:center;color:#18bc9c"><span style="display:inline-block;width:11px;height:11px;border-radius:50%;background:#18bc9c;vertical-align:-1px;margin-right:4px"></span>持仓中</div><div class="tx" style="left:512.50px;top:78.33px;width:100.00px;height:37.45px;line-height:37.45px;text-align:center;color:#333"><span style="display:inline-block;transform:scaleY(1.14);transform-origin:50% 68%">23.751900</span></div><div class="tx" style="left:612.50px;top:78.33px;width:100.00px;height:37.45px;line-height:37.45px;text-align:center;color:#333"><span style="display:inline-block;transform:scaleY(1.14);transform-origin:50% 68%">0.000000</span></div><div class="tx" style="left:712.50px;top:78.33px;width:70.80px;height:37.45px;line-height:37.45px;text-align:center;color:#333"><span style="display:inline-block;transform:scaleY(1.14);transform-origin:50% 68%">100.0000</span></div><div class="tx" style="left:783.30px;top:78.33px;width:43.10px;height:37.45px;line-height:37.45px;text-align:center;color:#333"><span style="display:inline-block;transform:scaleY(1.14);transform-origin:50% 68%">20</span></div><div class="tx" style="left:826.40px;top:78.33px;width:101.20px;height:37.45px;line-height:37.45px;text-align:center;color:#333"><span style="display:inline-block;transform:scaleY(1.14);transform-origin:50% 68%">118.759500</span></div><div class="tx" style="left:927.60px;top:78.33px;width:84.70px;height:37.45px;line-height:37.45px;text-align:center;color:#333"><span style="display:inline-block;transform:scaleY(1.14);transform-origin:50% 68%">2.137671</span></div><div class="tx" style="left:1012.30px;top:78.33px;width:100.30px;height:37.45px;line-height:37.45px;text-align:center;color:#333"><span style="display:inline-block;transform:scaleY(1.14);transform-origin:50% 68%">0.000000</span></div><div class="tx" style="left:1112.60px;top:78.33px;width:100.70px;height:37.45px;line-height:37.45px;text-align:center;color:#333"><span style="display:inline-block;transform:scaleY(1.14);transform-origin:50% 68%">0.000000</span></div><div class="tx" style="left:1213.30px;top:78.33px;width:137.30px;height:37.45px;line-height:37.45px;text-align:center;color:#333"><span style="display:inline-block;transform:scaleY(1.14);transform-origin:50% 68%">2026-03-16 13:52:37</span></div><div class="tx" style="left:1350.60px;top:78.33px;width:136.90px;height:37.45px;line-height:37.45px;text-align:center;color:#333">无</div><div class="tx" style="left:1487.50px;top:78.33px;width:138.00px;height:37.45px;line-height:37.45px;text-align:center;color:#333">无</div><div class="abs" style="left:12.199999999999989px;top:126.34px;width:13px;height:13px;border:1.3px solid #6b6b6b;border-radius:2.5px;background:#fff"></div><div class="tx" style="left:36.30px;top:115.81px;width:31.10px;height:37.45px;line-height:37.45px;text-align:center;color:#333"><span style="display:inline-block;transform:scaleY(1.14);transform-origin:50% 68%">38</span></div><div class="tx" style="left:67.40px;top:115.81px;width:69.10px;height:37.45px;line-height:37.45px;text-align:center;color:#333"><span style="display:inline-block;transform:scaleY(1.14);transform-origin:50% 68%">-</span></div><div class="tx" style="left:136.50px;top:115.81px;width:56.10px;height:37.45px;line-height:37.45px;text-align:center;color:#333"><span style="display:inline-block;transform:scaleY(1.14);transform-origin:50% 68%">3730</span></div><div class="tx" style="left:192.60px;top:115.81px;width:93.90px;height:37.45px;line-height:37.45px;text-align:center;color:#333">用户<span style="display:inline-block;transform:scaleY(1.14);transform-origin:50% 68%">7463396</span></div><div class="tx" style="left:286.50px;top:115.81px;width:43.00px;height:37.45px;line-height:37.45px;text-align:center;color:#333"><span style="display:inline-block;transform:scaleY(1.14);transform-origin:50% 68%">1</span></div><div class="tx" style="left:329.50px;top:115.81px;width:68.90px;height:37.45px;line-height:37.45px;text-align:center;color:#333"><span style="display:inline-block;transform:scaleY(1.14);transform-origin:50% 68%">btcusdt</span></div><div class="tx" style="left:398.40px;top:115.81px;width:43.10px;height:37.45px;line-height:37.45px;text-align:center;color:#333">做多</div><div class="tx" style="left:441.50px;top:115.81px;width:71.00px;height:37.45px;line-height:37.45px;text-align:center;color:#18bc9c"><span style="display:inline-block;width:11px;height:11px;border-radius:50%;background:#18bc9c;vertical-align:-1px;margin-right:4px"></span>持仓中</div><div class="tx" style="left:512.50px;top:115.81px;width:100.00px;height:37.45px;line-height:37.45px;text-align:center;color:#333"><span style="display:inline-block;transform:scaleY(1.14);transform-origin:50% 68%">73730.850000</span></div><div class="tx" style="left:612.50px;top:115.81px;width:100.00px;height:37.45px;line-height:37.45px;text-align:center;color:#333"><span style="display:inline-block;transform:scaleY(1.14);transform-origin:50% 68%">0.000000</span></div><div class="tx" style="left:712.50px;top:115.81px;width:70.80px;height:37.45px;line-height:37.45px;text-align:center;color:#333"><span style="display:inline-block;transform:scaleY(1.14);transform-origin:50% 68%">0.1000</span></div><div class="tx" style="left:783.30px;top:115.81px;width:43.10px;height:37.45px;line-height:37.45px;text-align:center;color:#333"><span style="display:inline-block;transform:scaleY(1.14);transform-origin:50% 68%">20</span></div><div class="tx" style="left:826.40px;top:115.81px;width:101.20px;height:37.45px;line-height:37.45px;text-align:center;color:#333"><span style="display:inline-block;transform:scaleY(1.14);transform-origin:50% 68%">368.654250</span></div><div class="tx" style="left:927.60px;top:115.81px;width:84.70px;height:37.45px;line-height:37.45px;text-align:center;color:#333"><span style="display:inline-block;transform:scaleY(1.14);transform-origin:50% 68%">6.635776</span></div><div class="tx" style="left:1012.30px;top:115.81px;width:100.30px;height:37.45px;line-height:37.45px;text-align:center;color:#333"><span style="display:inline-block;transform:scaleY(1.14);transform-origin:50% 68%">0.000000</span></div><div class="tx" style="left:1112.60px;top:115.81px;width:100.70px;height:37.45px;line-height:37.45px;text-align:center;color:#333"><span style="display:inline-block;transform:scaleY(1.14);transform-origin:50% 68%">0.000000</span></div><div class="tx" style="left:1213.30px;top:115.81px;width:137.30px;height:37.45px;line-height:37.45px;text-align:center;color:#333"><span style="display:inline-block;transform:scaleY(1.14);transform-origin:50% 68%">2026-03-16 12:33:31</span></div><div class="tx" style="left:1350.60px;top:115.81px;width:136.90px;height:37.45px;line-height:37.45px;text-align:center;color:#333">无</div><div class="tx" style="left:1487.50px;top:115.81px;width:138.00px;height:37.45px;line-height:37.45px;text-align:center;color:#333">无</div><div class="abs" style="left:12.199999999999989px;top:163.76px;width:13px;height:13px;border:1.3px solid #6b6b6b;border-radius:2.5px;background:#fff"></div><div class="tx" style="left:36.30px;top:153.29px;width:31.10px;height:37.45px;line-height:37.45px;text-align:center;color:#333"><span style="display:inline-block;transform:scaleY(1.14);transform-origin:50% 68%">37</span></div><div class="tx" style="left:67.40px;top:153.29px;width:69.10px;height:37.45px;line-height:37.45px;text-align:center;color:#333"><span style="display:inline-block;transform:scaleY(1.14);transform-origin:50% 68%">-</span></div><div class="tx" style="left:136.50px;top:153.29px;width:56.10px;height:37.45px;line-height:37.45px;text-align:center;color:#333"><span style="display:inline-block;transform:scaleY(1.14);transform-origin:50% 68%">3731</span></div><div class="tx" style="left:192.60px;top:153.29px;width:93.90px;height:37.45px;line-height:37.45px;text-align:center;color:#333">用户<span style="display:inline-block;transform:scaleY(1.14);transform-origin:50% 68%">1987689</span></div><div class="tx" style="left:286.50px;top:153.29px;width:43.00px;height:37.45px;line-height:37.45px;text-align:center;color:#333"><span style="display:inline-block;transform:scaleY(1.14);transform-origin:50% 68%">1</span></div><div class="tx" style="left:329.50px;top:153.29px;width:68.90px;height:37.45px;line-height:37.45px;text-align:center;color:#333"><span style="display:inline-block;transform:scaleY(1.14);transform-origin:50% 68%">btcusdt</span></div><div class="tx" style="left:398.40px;top:153.29px;width:43.10px;height:37.45px;line-height:37.45px;text-align:center;color:#18bc9c">做空</div><div class="tx" style="left:441.50px;top:153.29px;width:71.00px;height:37.45px;line-height:37.45px;text-align:center;color:#e74c3c"><span style="display:inline-block;width:11px;height:11px;border-radius:50%;background:#e74c3c;vertical-align:-1px;margin-right:4px"></span>已平仓</div><div class="tx" style="left:512.50px;top:153.29px;width:100.00px;height:37.45px;line-height:37.45px;text-align:center;color:#333"><span style="display:inline-block;transform:scaleY(1.14);transform-origin:50% 68%">72407.540000</span></div><div class="tx" style="left:612.50px;top:153.29px;width:100.00px;height:37.45px;line-height:37.45px;text-align:center;color:#333"><span style="display:inline-block;transform:scaleY(1.14);transform-origin:50% 68%">76288.420000</span></div><div class="tx" style="left:712.50px;top:153.29px;width:70.80px;height:37.45px;line-height:37.45px;text-align:center;color:#333"><span style="display:inline-block;transform:scaleY(1.14);transform-origin:50% 68%">0.1000</span></div><div class="tx" style="left:783.30px;top:153.29px;width:43.10px;height:37.45px;line-height:37.45px;text-align:center;color:#333"><span style="display:inline-block;transform:scaleY(1.14);transform-origin:50% 68%">20</span></div><div class="tx" style="left:826.40px;top:153.29px;width:101.20px;height:37.45px;line-height:37.45px;text-align:center;color:#333"><span style="display:inline-block;transform:scaleY(1.14);transform-origin:50% 68%">362.037700</span></div><div class="tx" style="left:927.60px;top:153.29px;width:84.70px;height:37.45px;line-height:37.45px;text-align:center;color:#333"><span style="display:inline-block;transform:scaleY(1.14);transform-origin:50% 68%">6.516679</span></div><div class="tx" style="left:1012.30px;top:153.29px;width:100.30px;height:37.45px;line-height:37.45px;text-align:center;color:#333"><span style="display:inline-block;transform:scaleY(1.14);transform-origin:50% 68%">0.000000</span></div><div class="tx" style="left:1112.60px;top:153.29px;width:100.70px;height:37.45px;line-height:37.45px;text-align:center;color:#333"><span style="display:inline-block;transform:scaleY(1.14);transform-origin:50% 68%">0.000000</span></div><div class="tx" style="left:1213.30px;top:153.29px;width:137.30px;height:37.45px;line-height:37.45px;text-align:center;color:#333"><span style="display:inline-block;transform:scaleY(1.14);transform-origin:50% 68%">2026-03-16 10:27:50</span></div><div class="tx" style="left:1350.60px;top:153.29px;width:136.90px;height:37.45px;line-height:37.45px;text-align:center;color:#333">无</div><div class="tx" style="left:1487.50px;top:153.29px;width:138.00px;height:37.45px;line-height:37.45px;text-align:center;color:#333"><span style="display:inline-block;transform:scaleY(1.14);transform-origin:50% 68%">2026-03-16 10:32:02</span></div><div class="abs" style="left:12.199999999999989px;top:201.18px;width:13px;height:13px;border:1.3px solid #6b6b6b;border-radius:2.5px;background:#fff"></div><div class="tx" style="left:36.30px;top:190.77px;width:31.10px;height:37.45px;line-height:37.45px;text-align:center;color:#333"><span style="display:inline-block;transform:scaleY(1.14);transform-origin:50% 68%">36</span></div><div class="tx" style="left:67.40px;top:190.77px;width:69.10px;height:37.45px;line-height:37.45px;text-align:center;color:#333"><span style="display:inline-block;transform:scaleY(1.14);transform-origin:50% 68%">-</span></div><div class="tx" style="left:136.50px;top:190.77px;width:56.10px;height:37.45px;line-height:37.45px;text-align:center;color:#333"><span style="display:inline-block;transform:scaleY(1.14);transform-origin:50% 68%">3731</span></div><div class="tx" style="left:192.60px;top:190.77px;width:93.90px;height:37.45px;line-height:37.45px;text-align:center;color:#333">用户<span style="display:inline-block;transform:scaleY(1.14);transform-origin:50% 68%">1987689</span></div><div class="tx" style="left:286.50px;top:190.77px;width:43.00px;height:37.45px;line-height:37.45px;text-align:center;color:#333"><span style="display:inline-block;transform:scaleY(1.14);transform-origin:50% 68%">1</span></div><div class="tx" style="left:329.50px;top:190.77px;width:68.90px;height:37.45px;line-height:37.45px;text-align:center;color:#333"><span style="display:inline-block;transform:scaleY(1.14);transform-origin:50% 68%">btcusdt</span></div><div class="tx" style="left:398.40px;top:190.77px;width:43.10px;height:37.45px;line-height:37.45px;text-align:center;color:#333">做多</div><div class="tx" style="left:441.50px;top:190.77px;width:71.00px;height:37.45px;line-height:37.45px;text-align:center;color:#18bc9c"><span style="display:inline-block;width:11px;height:11px;border-radius:50%;background:#18bc9c;vertical-align:-1px;margin-right:4px"></span>持仓中</div><div class="tx" style="left:512.50px;top:190.77px;width:100.00px;height:37.45px;line-height:37.45px;text-align:center;color:#333"><span style="display:inline-block;transform:scaleY(1.14);transform-origin:50% 68%">72559.540000</span></div><div class="tx" style="left:612.50px;top:190.77px;width:100.00px;height:37.45px;line-height:37.45px;text-align:center;color:#333"><span style="display:inline-block;transform:scaleY(1.14);transform-origin:50% 68%">0.000000</span></div><div class="tx" style="left:712.50px;top:190.77px;width:70.80px;height:37.45px;line-height:37.45px;text-align:center;color:#333"><span style="display:inline-block;transform:scaleY(1.14);transform-origin:50% 68%">0.1000</span></div><div class="tx" style="left:783.30px;top:190.77px;width:43.10px;height:37.45px;line-height:37.45px;text-align:center;color:#333"><span style="display:inline-block;transform:scaleY(1.14);transform-origin:50% 68%">10</span></div><div class="tx" style="left:826.40px;top:190.77px;width:101.20px;height:37.45px;line-height:37.45px;text-align:center;color:#333"><span style="display:inline-block;transform:scaleY(1.14);transform-origin:50% 68%">725.595400</span></div><div class="tx" style="left:927.60px;top:190.77px;width:84.70px;height:37.45px;line-height:37.45px;text-align:center;color:#333"><span style="display:inline-block;transform:scaleY(1.14);transform-origin:50% 68%">13.060717</span></div><div class="tx" style="left:1012.30px;top:190.77px;width:100.30px;height:37.45px;line-height:37.45px;text-align:center;color:#333"><span style="display:inline-block;transform:scaleY(1.14);transform-origin:50% 68%">0.000000</span></div><div class="tx" style="left:1112.60px;top:190.77px;width:100.70px;height:37.45px;line-height:37.45px;text-align:center;color:#333"><span style="display:inline-block;transform:scaleY(1.14);transform-origin:50% 68%">0.000000</span></div><div class="tx" style="left:1213.30px;top:190.77px;width:137.30px;height:37.45px;line-height:37.45px;text-align:center;color:#333"><span style="display:inline-block;transform:scaleY(1.14);transform-origin:50% 68%">2026-03-16 09:35:07</span></div><div class="tx" style="left:1350.60px;top:190.77px;width:136.90px;height:37.45px;line-height:37.45px;text-align:center;color:#333">无</div><div class="tx" style="left:1487.50px;top:190.77px;width:138.00px;height:37.45px;line-height:37.45px;text-align:center;color:#333">无</div><div class="abs" style="left:12.199999999999989px;top:238.60px;width:13px;height:13px;border:1.3px solid #6b6b6b;border-radius:2.5px;background:#fff"></div><div class="tx" style="left:36.30px;top:228.25px;width:31.10px;height:37.45px;line-height:37.45px;text-align:center;color:#333"><span style="display:inline-block;transform:scaleY(1.14);transform-origin:50% 68%">35</span></div><div class="tx" style="left:67.40px;top:228.25px;width:69.10px;height:37.45px;line-height:37.45px;text-align:center;color:#333"><span style="display:inline-block;transform:scaleY(1.14);transform-origin:50% 68%">-</span></div><div class="tx" style="left:136.50px;top:228.25px;width:56.10px;height:37.45px;line-height:37.45px;text-align:center;color:#333"><span style="display:inline-block;transform:scaleY(1.14);transform-origin:50% 68%">3731</span></div><div class="tx" style="left:192.60px;top:228.25px;width:93.90px;height:37.45px;line-height:37.45px;text-align:center;color:#333">用户<span style="display:inline-block;transform:scaleY(1.14);transform-origin:50% 68%">1987689</span></div><div class="tx" style="left:286.50px;top:228.25px;width:43.00px;height:37.45px;line-height:37.45px;text-align:center;color:#333"><span style="display:inline-block;transform:scaleY(1.14);transform-origin:50% 68%">1</span></div><div class="tx" style="left:329.50px;top:228.25px;width:68.90px;height:37.45px;line-height:37.45px;text-align:center;color:#333"><span style="display:inline-block;transform:scaleY(1.14);transform-origin:50% 68%">btcusdt</span></div><div class="tx" style="left:398.40px;top:228.25px;width:43.10px;height:37.45px;line-height:37.45px;text-align:center;color:#333">做多</div><div class="tx" style="left:441.50px;top:228.25px;width:71.00px;height:37.45px;line-height:37.45px;text-align:center;color:#18bc9c"><span style="display:inline-block;width:11px;height:11px;border-radius:50%;background:#18bc9c;vertical-align:-1px;margin-right:4px"></span>持仓中</div><div class="tx" style="left:512.50px;top:228.25px;width:100.00px;height:37.45px;line-height:37.45px;text-align:center;color:#333"><span style="display:inline-block;transform:scaleY(1.14);transform-origin:50% 68%">72559.540000</span></div><div class="tx" style="left:612.50px;top:228.25px;width:100.00px;height:37.45px;line-height:37.45px;text-align:center;color:#333"><span style="display:inline-block;transform:scaleY(1.14);transform-origin:50% 68%">0.000000</span></div><div class="tx" style="left:712.50px;top:228.25px;width:70.80px;height:37.45px;line-height:37.45px;text-align:center;color:#333"><span style="display:inline-block;transform:scaleY(1.14);transform-origin:50% 68%">0.1000</span></div><div class="tx" style="left:783.30px;top:228.25px;width:43.10px;height:37.45px;line-height:37.45px;text-align:center;color:#333"><span style="display:inline-block;transform:scaleY(1.14);transform-origin:50% 68%">20</span></div><div class="tx" style="left:826.40px;top:228.25px;width:101.20px;height:37.45px;line-height:37.45px;text-align:center;color:#333"><span style="display:inline-block;transform:scaleY(1.14);transform-origin:50% 68%">362.797700</span></div><div class="tx" style="left:927.60px;top:228.25px;width:84.70px;height:37.45px;line-height:37.45px;text-align:center;color:#333"><span style="display:inline-block;transform:scaleY(1.14);transform-origin:50% 68%">6.530359</span></div><div class="tx" style="left:1012.30px;top:228.25px;width:100.30px;height:37.45px;line-height:37.45px;text-align:center;color:#333"><span style="display:inline-block;transform:scaleY(1.14);transform-origin:50% 68%">0.000000</span></div><div class="tx" style="left:1112.60px;top:228.25px;width:100.70px;height:37.45px;line-height:37.45px;text-align:center;color:#333"><span style="display:inline-block;transform:scaleY(1.14);transform-origin:50% 68%">0.000000</span></div><div class="tx" style="left:1213.30px;top:228.25px;width:137.30px;height:37.45px;line-height:37.45px;text-align:center;color:#333"><span style="display:inline-block;transform:scaleY(1.14);transform-origin:50% 68%">2026-03-16 09:34:48</span></div><div class="tx" style="left:1350.60px;top:228.25px;width:136.90px;height:37.45px;line-height:37.45px;text-align:center;color:#333">无</div><div class="tx" style="left:1487.50px;top:228.25px;width:138.00px;height:37.45px;line-height:37.45px;text-align:center;color:#333">无</div><div class="abs" style="left:12.199999999999989px;top:276.02px;width:13px;height:13px;border:1.3px solid #6b6b6b;border-radius:2.5px;background:#fff"></div><div class="tx" style="left:36.30px;top:265.73px;width:31.10px;height:37.45px;line-height:37.45px;text-align:center;color:#333"><span style="display:inline-block;transform:scaleY(1.14);transform-origin:50% 68%">34</span></div><div class="tx" style="left:67.40px;top:265.73px;width:69.10px;height:37.45px;line-height:37.45px;text-align:center;color:#333"><span style="display:inline-block;transform:scaleY(1.14);transform-origin:50% 68%">-</span></div><div class="tx" style="left:136.50px;top:265.73px;width:56.10px;height:37.45px;line-height:37.45px;text-align:center;color:#333"><span style="display:inline-block;transform:scaleY(1.14);transform-origin:50% 68%">3729</span></div><div class="tx" style="left:192.60px;top:265.73px;width:93.90px;height:37.45px;line-height:37.45px;text-align:center;color:#333">测试<span style="display:inline-block;transform:scaleY(1.14);transform-origin:50% 68%">2</span></div><div class="tx" style="left:286.50px;top:265.73px;width:43.00px;height:37.45px;line-height:37.45px;text-align:center;color:#333"><span style="display:inline-block;transform:scaleY(1.14);transform-origin:50% 68%">1</span></div><div class="tx" style="left:329.50px;top:265.73px;width:68.90px;height:37.45px;line-height:37.45px;text-align:center;color:#333"><span style="display:inline-block;transform:scaleY(1.14);transform-origin:50% 68%">btcusdt</span></div><div class="tx" style="left:398.40px;top:265.73px;width:43.10px;height:37.45px;line-height:37.45px;text-align:center;color:#333">做多</div><div class="tx" style="left:441.50px;top:265.73px;width:71.00px;height:37.45px;line-height:37.45px;text-align:center;color:#e74c3c"><span style="display:inline-block;width:11px;height:11px;border-radius:50%;background:#e74c3c;vertical-align:-1px;margin-right:4px"></span>已平仓</div><div class="tx" style="left:512.50px;top:265.73px;width:100.00px;height:37.45px;line-height:37.45px;text-align:center;color:#333"><span style="display:inline-block;transform:scaleY(1.14);transform-origin:50% 68%">16918.370000</span></div><div class="tx" style="left:612.50px;top:265.73px;width:100.00px;height:37.45px;line-height:37.45px;text-align:center;color:#333"><span style="display:inline-block;transform:scaleY(1.14);transform-origin:50% 68%">16943.960000</span></div><div class="tx" style="left:712.50px;top:265.73px;width:70.80px;height:37.45px;line-height:37.45px;text-align:center;color:#333"><span style="display:inline-block;transform:scaleY(1.14);transform-origin:50% 68%">5.0000</span></div><div class="tx" style="left:783.30px;top:265.73px;width:43.10px;height:37.45px;line-height:37.45px;text-align:center;color:#333"><span style="display:inline-block;transform:scaleY(1.14);transform-origin:50% 68%">10</span></div><div class="tx" style="left:826.40px;top:265.73px;width:101.20px;height:37.45px;line-height:37.45px;text-align:center;color:#333"><span style="display:inline-block;transform:scaleY(1.14);transform-origin:50% 68%">8459.185000</span></div><div class="tx" style="left:927.60px;top:265.73px;width:84.70px;height:37.45px;line-height:37.45px;text-align:center;color:#333"><span style="display:inline-block;transform:scaleY(1.14);transform-origin:50% 68%">152.265330</span></div><div class="tx" style="left:1012.30px;top:265.73px;width:100.30px;height:37.45px;line-height:37.45px;text-align:center;color:#333"><span style="display:inline-block;transform:scaleY(1.14);transform-origin:50% 68%">16930.000000</span></div><div class="tx" style="left:1112.60px;top:265.73px;width:100.70px;height:37.45px;line-height:37.45px;text-align:center;color:#333"><span style="display:inline-block;transform:scaleY(1.14);transform-origin:50% 68%">16900.000000</span></div><div class="tx" style="left:1213.30px;top:265.73px;width:137.30px;height:37.45px;line-height:37.45px;text-align:center;color:#333"><span style="display:inline-block;transform:scaleY(1.14);transform-origin:50% 68%">2022-11-15 16:58:11</span></div><div class="tx" style="left:1350.60px;top:265.73px;width:136.90px;height:37.45px;line-height:37.45px;text-align:center;color:#333"><span style="display:inline-block;transform:scaleY(1.14);transform-origin:50% 68%">2022-11-15 17:02:34</span></div><div class="tx" style="left:1487.50px;top:265.73px;width:138.00px;height:37.45px;line-height:37.45px;text-align:center;color:#333"><span style="display:inline-block;transform:scaleY(1.14);transform-origin:50% 68%">2022-11-15 17:09:50</span></div><div class="abs" style="left:12.199999999999989px;top:313.44px;width:13px;height:13px;border:1.3px solid #6b6b6b;border-radius:2.5px;background:#fff"></div><div class="tx" style="left:36.30px;top:303.21px;width:31.10px;height:37.45px;line-height:37.45px;text-align:center;color:#333"><span style="display:inline-block;transform:scaleY(1.14);transform-origin:50% 68%">33</span></div><div class="tx" style="left:67.40px;top:303.21px;width:69.10px;height:37.45px;line-height:37.45px;text-align:center;color:#333"><span style="display:inline-block;transform:scaleY(1.14);transform-origin:50% 68%">-</span></div><div class="tx" style="left:136.50px;top:303.21px;width:56.10px;height:37.45px;line-height:37.45px;text-align:center;color:#333"><span style="display:inline-block;transform:scaleY(1.14);transform-origin:50% 68%">3729</span></div><div class="tx" style="left:192.60px;top:303.21px;width:93.90px;height:37.45px;line-height:37.45px;text-align:center;color:#333">测试<span style="display:inline-block;transform:scaleY(1.14);transform-origin:50% 68%">2</span></div><div class="tx" style="left:286.50px;top:303.21px;width:43.00px;height:37.45px;line-height:37.45px;text-align:center;color:#333"><span style="display:inline-block;transform:scaleY(1.14);transform-origin:50% 68%">1</span></div><div class="tx" style="left:329.50px;top:303.21px;width:68.90px;height:37.45px;line-height:37.45px;text-align:center;color:#333"><span style="display:inline-block;transform:scaleY(1.14);transform-origin:50% 68%">btcusdt</span></div><div class="tx" style="left:398.40px;top:303.21px;width:43.10px;height:37.45px;line-height:37.45px;text-align:center;color:#333">做多</div><div class="tx" style="left:441.50px;top:303.21px;width:71.00px;height:37.45px;line-height:37.45px;text-align:center;color:#e74c3c"><span style="display:inline-block;width:11px;height:11px;border-radius:50%;background:#e74c3c;vertical-align:-1px;margin-right:4px"></span>已平仓</div><div class="tx" style="left:512.50px;top:303.21px;width:100.00px;height:37.45px;line-height:37.45px;text-align:center;color:#333"><span style="display:inline-block;transform:scaleY(1.14);transform-origin:50% 68%">16921.460000</span></div><div class="tx" style="left:612.50px;top:303.21px;width:100.00px;height:37.45px;line-height:37.45px;text-align:center;color:#333"><span style="display:inline-block;transform:scaleY(1.14);transform-origin:50% 68%">16926.310000</span></div><div class="tx" style="left:712.50px;top:303.21px;width:70.80px;height:37.45px;line-height:37.45px;text-align:center;color:#333"><span style="display:inline-block;transform:scaleY(1.14);transform-origin:50% 68%">5.0000</span></div><div class="tx" style="left:783.30px;top:303.21px;width:43.10px;height:37.45px;line-height:37.45px;text-align:center;color:#333"><span style="display:inline-block;transform:scaleY(1.14);transform-origin:50% 68%">5</span></div><div class="tx" style="left:826.40px;top:303.21px;width:101.20px;height:37.45px;line-height:37.45px;text-align:center;color:#333"><span style="display:inline-block;transform:scaleY(1.14);transform-origin:50% 68%">16921.460000</span></div><div class="tx" style="left:927.60px;top:303.21px;width:84.70px;height:37.45px;line-height:37.45px;text-align:center;color:#333"><span style="display:inline-block;transform:scaleY(1.14);transform-origin:50% 68%">304.586280</span></div><div class="tx" style="left:1012.30px;top:303.21px;width:100.30px;height:37.45px;line-height:37.45px;text-align:center;color:#333"><span style="display:inline-block;transform:scaleY(1.14);transform-origin:50% 68%">0.000000</span></div><div class="tx" style="left:1112.60px;top:303.21px;width:100.70px;height:37.45px;line-height:37.45px;text-align:center;color:#333"><span style="display:inline-block;transform:scaleY(1.14);transform-origin:50% 68%">0.000000</span></div><div class="tx" style="left:1213.30px;top:303.21px;width:137.30px;height:37.45px;line-height:37.45px;text-align:center;color:#333"><span style="display:inline-block;transform:scaleY(1.14);transform-origin:50% 68%">2022-11-15 16:57:52</span></div><div class="tx" style="left:1350.60px;top:303.21px;width:136.90px;height:37.45px;line-height:37.45px;text-align:center;color:#333">无</div><div class="tx" style="left:1487.50px;top:303.21px;width:138.00px;height:37.45px;line-height:37.45px;text-align:center;color:#333"><span style="display:inline-block;transform:scaleY(1.14);transform-origin:50% 68%">2022-11-15 17:06:30</span></div><div class="abs" style="left:12.199999999999989px;top:350.86px;width:13px;height:13px;border:1.3px solid #6b6b6b;border-radius:2.5px;background:#fff"></div><div class="tx" style="left:36.30px;top:340.69px;width:31.10px;height:37.45px;line-height:37.45px;text-align:center;color:#333"><span style="display:inline-block;transform:scaleY(1.14);transform-origin:50% 68%">32</span></div><div class="tx" style="left:67.40px;top:340.69px;width:69.10px;height:37.45px;line-height:37.45px;text-align:center;color:#333"><span style="display:inline-block;transform:scaleY(1.14);transform-origin:50% 68%">-</span></div><div class="tx" style="left:136.50px;top:340.69px;width:56.10px;height:37.45px;line-height:37.45px;text-align:center;color:#333"><span style="display:inline-block;transform:scaleY(1.14);transform-origin:50% 68%">3729</span></div><div class="tx" style="left:192.60px;top:340.69px;width:93.90px;height:37.45px;line-height:37.45px;text-align:center;color:#333">测试<span style="display:inline-block;transform:scaleY(1.14);transform-origin:50% 68%">2</span></div><div class="tx" style="left:286.50px;top:340.69px;width:43.00px;height:37.45px;line-height:37.45px;text-align:center;color:#333"><span style="display:inline-block;transform:scaleY(1.14);transform-origin:50% 68%">1</span></div><div class="tx" style="left:329.50px;top:340.69px;width:68.90px;height:37.45px;line-height:37.45px;text-align:center;color:#333"><span style="display:inline-block;transform:scaleY(1.14);transform-origin:50% 68%">btcusdt</span></div><div class="tx" style="left:398.40px;top:340.69px;width:43.10px;height:37.45px;line-height:37.45px;text-align:center;color:#333">做多</div><div class="tx" style="left:441.50px;top:340.69px;width:71.00px;height:37.45px;line-height:37.45px;text-align:center;color:#e74c3c"><span style="display:inline-block;width:11px;height:11px;border-radius:50%;background:#e74c3c;vertical-align:-1px;margin-right:4px"></span>已平仓</div><div class="tx" style="left:512.50px;top:340.69px;width:100.00px;height:37.45px;line-height:37.45px;text-align:center;color:#333"><span style="display:inline-block;transform:scaleY(1.14);transform-origin:50% 68%">16842.870000</span></div><div class="tx" style="left:612.50px;top:340.69px;width:100.00px;height:37.45px;line-height:37.45px;text-align:center;color:#333"><span style="display:inline-block;transform:scaleY(1.14);transform-origin:50% 68%">16842.000000</span></div><div class="tx" style="left:712.50px;top:340.69px;width:70.80px;height:37.45px;line-height:37.45px;text-align:center;color:#333"><span style="display:inline-block;transform:scaleY(1.14);transform-origin:50% 68%">5.0000</span></div><div class="tx" style="left:783.30px;top:340.69px;width:43.10px;height:37.45px;line-height:37.45px;text-align:center;color:#333"><span style="display:inline-block;transform:scaleY(1.14);transform-origin:50% 68%">5</span></div><div class="tx" style="left:826.40px;top:340.69px;width:101.20px;height:37.45px;line-height:37.45px;text-align:center;color:#333"><span style="display:inline-block;transform:scaleY(1.14);transform-origin:50% 68%">16842.870000</span></div><div class="tx" style="left:927.60px;top:340.69px;width:84.70px;height:37.45px;line-height:37.45px;text-align:center;color:#333"><span style="display:inline-block;transform:scaleY(1.14);transform-origin:50% 68%">303.171660</span></div><div class="tx" style="left:1012.30px;top:340.69px;width:100.30px;height:37.45px;line-height:37.45px;text-align:center;color:#333"><span style="display:inline-block;transform:scaleY(1.14);transform-origin:50% 68%">16860.000000</span></div><div class="tx" style="left:1112.60px;top:340.69px;width:100.70px;height:37.45px;line-height:37.45px;text-align:center;color:#333"><span style="display:inline-block;transform:scaleY(1.14);transform-origin:50% 68%">16842.000000</span></div><div class="tx" style="left:1213.30px;top:340.69px;width:137.30px;height:37.45px;line-height:37.45px;text-align:center;color:#333"><span style="display:inline-block;transform:scaleY(1.14);transform-origin:50% 68%">2022-11-15 15:56:33</span></div><div class="tx" style="left:1350.60px;top:340.69px;width:136.90px;height:37.45px;line-height:37.45px;text-align:center;color:#333"><span style="display:inline-block;transform:scaleY(1.14);transform-origin:50% 68%">2022-11-15 15:56:56</span></div><div class="tx" style="left:1487.50px;top:340.69px;width:138.00px;height:37.45px;line-height:37.45px;text-align:center;color:#333"><span style="display:inline-block;transform:scaleY(1.14);transform-origin:50% 68%">2022-11-15 15:58:51</span></div><div class="abs" style="left:12.199999999999989px;top:388.28px;width:13px;height:13px;border:1.3px solid #6b6b6b;border-radius:2.5px;background:#fff"></div><div class="tx" style="left:36.30px;top:378.17px;width:31.10px;height:37.45px;line-height:37.45px;text-align:center;color:#333"><span style="display:inline-block;transform:scaleY(1.14);transform-origin:50% 68%">31</span></div><div class="tx" style="left:67.40px;top:378.17px;width:69.10px;height:37.45px;line-height:37.45px;text-align:center;color:#333"><span style="display:inline-block;transform:scaleY(1.14);transform-origin:50% 68%">-</span></div><div class="tx" style="left:136.50px;top:378.17px;width:56.10px;height:37.45px;line-height:37.45px;text-align:center;color:#333"><span style="display:inline-block;transform:scaleY(1.14);transform-origin:50% 68%">3729</span></div><div class="tx" style="left:192.60px;top:378.17px;width:93.90px;height:37.45px;line-height:37.45px;text-align:center;color:#333">测试<span style="display:inline-block;transform:scaleY(1.14);transform-origin:50% 68%">2</span></div><div class="tx" style="left:286.50px;top:378.17px;width:43.00px;height:37.45px;line-height:37.45px;text-align:center;color:#333"><span style="display:inline-block;transform:scaleY(1.14);transform-origin:50% 68%">1</span></div><div class="tx" style="left:329.50px;top:378.17px;width:68.90px;height:37.45px;line-height:37.45px;text-align:center;color:#333"><span style="display:inline-block;transform:scaleY(1.14);transform-origin:50% 68%">btcusdt</span></div><div class="tx" style="left:398.40px;top:378.17px;width:43.10px;height:37.45px;line-height:37.45px;text-align:center;color:#18bc9c">做空</div><div class="tx" style="left:441.50px;top:378.17px;width:71.00px;height:37.45px;line-height:37.45px;text-align:center;color:#e74c3c"><span style="display:inline-block;width:11px;height:11px;border-radius:50%;background:#e74c3c;vertical-align:-1px;margin-right:4px"></span>已平仓</div><div class="tx" style="left:512.50px;top:378.17px;width:100.00px;height:37.45px;line-height:37.45px;text-align:center;color:#333"><span style="display:inline-block;transform:scaleY(1.14);transform-origin:50% 68%">16799.690000</span></div><div class="tx" style="left:612.50px;top:378.17px;width:100.00px;height:37.45px;line-height:37.45px;text-align:center;color:#333"><span style="display:inline-block;transform:scaleY(1.14);transform-origin:50% 68%">72587.940000</span></div><div class="tx" style="left:712.50px;top:378.17px;width:70.80px;height:37.45px;line-height:37.45px;text-align:center;color:#333"><span style="display:inline-block;transform:scaleY(1.14);transform-origin:50% 68%">5.0000</span></div><div class="tx" style="left:783.30px;top:378.17px;width:43.10px;height:37.45px;line-height:37.45px;text-align:center;color:#333"><span style="display:inline-block;transform:scaleY(1.14);transform-origin:50% 68%">5</span></div><div class="tx" style="left:826.40px;top:378.17px;width:101.20px;height:37.45px;line-height:37.45px;text-align:center;color:#333"><span style="display:inline-block;transform:scaleY(1.14);transform-origin:50% 68%">16799.690000</span></div><div class="tx" style="left:927.60px;top:378.17px;width:84.70px;height:37.45px;line-height:37.45px;text-align:center;color:#333"><span style="display:inline-block;transform:scaleY(1.14);transform-origin:50% 68%">302.394420</span></div><div class="tx" style="left:1012.30px;top:378.17px;width:100.30px;height:37.45px;line-height:37.45px;text-align:center;color:#333"><span style="display:inline-block;transform:scaleY(1.14);transform-origin:50% 68%">0.000000</span></div><div class="tx" style="left:1112.60px;top:378.17px;width:100.70px;height:37.45px;line-height:37.45px;text-align:center;color:#333"><span style="display:inline-block;transform:scaleY(1.14);transform-origin:50% 68%">0.000000</span></div><div class="tx" style="left:1213.30px;top:378.17px;width:137.30px;height:37.45px;line-height:37.45px;text-align:center;color:#333"><span style="display:inline-block;transform:scaleY(1.14);transform-origin:50% 68%">2022-11-15 15:32:24</span></div><div class="tx" style="left:1350.60px;top:378.17px;width:136.90px;height:37.45px;line-height:37.45px;text-align:center;color:#333">无</div><div class="tx" style="left:1487.50px;top:378.17px;width:138.00px;height:37.45px;line-height:37.45px;text-align:center;color:#333"><span style="display:inline-block;transform:scaleY(1.14);transform-origin:50% 68%">2026-03-16 08:23:33</span></div></div>
<div class="abs" style="left:260px;top:604.5px;width:1629.3px;height:15.5px;background:#fafafa"></div>
<svg class="abs" style="left:264.5px;top:607.5px" width="6" height="10" viewBox="0 0 6 10"><path d="M5.5 0.5 L0.5 5 L5.5 9.5 Z" fill="#a3a3a3"/></svg>
<svg class="abs" style="left:1878.5px;top:607.5px" width="6" height="10" viewBox="0 0 6 10"><path d="M0.5 0.5 L5.5 5 L0.5 9.5 Z" fill="#505050"/></svg>
<div class="abs" style="left:278px;top:608px;width:1449px;height:9px;border-radius:4.5px;background:#8a8a8a"></div>
<div class="tx" style="left:260.5px;top:636.8px;line-height:20px;color:#333;font-size:13px">显示第 <span style="display:inline-block;transform:scaleY(1.14);transform-origin:50% 68%">1</span> 到第 <span style="display:inline-block;transform:scaleY(1.14);transform-origin:50% 68%">10</span> 条记录，总共 <span style="display:inline-block;transform:scaleY(1.14);transform-origin:50% 68%">40</span> 条记录 每页显示</div>
<div class="abs" style="left:560.3px;top:632.2px;width:50.3px;height:31.2px;border:1px solid #ddd;background:#f4f4f4;border-radius:3px"></div>
<div class="tx" style="left:573.5px;top:632.2px;line-height:30.3px;color:#333;font-size:12px"><span style="display:inline-block;transform:scaleY(1.14);transform-origin:50% 68%">10</span></div>
<svg class="abs" style="left:590px;top:645px" width="8" height="5" viewBox="0 0 8 5"><path d="M0 4.5 L8 4.5 L4 0.5 Z" fill="#333"/></svg>
<div class="tx" style="left:615px;top:636.8px;line-height:20px;color:#333;font-size:13px">条记录</div>
<div class="abs" style="left:1522.3px;top:630px;width:257.3px;height:32px;border:1px solid #ddd;border-radius:3px;background:#fafafa"></div>
<div class="tx" style="left:1522.30px;top:629.3px;width:63.70px;line-height:32px;text-align:center;color:#666;font-size:13px">上一页</div>
<div class="abs" style="left:1585.50px;top:630px;width:1px;height:32px;background:#ddd"></div>
<div class="abs" style="left:1585.50px;top:630px;width:34.00px;height:32px;background:#2c3e50"></div>
<div class="tx" style="left:1586.00px;top:630.8px;width:33.00px;line-height:32px;text-align:center;color:#fff;font-size:13px"><span style="display:inline-block;transform:scaleY(1.14);transform-origin:50% 68%">1</span></div>
<div class="abs" style="left:1618.50px;top:630px;width:1px;height:32px;background:#ddd"></div>
<div class="tx" style="left:1619.00px;top:630.8px;width:32.40px;line-height:32px;text-align:center;color:#666;font-size:13px"><span style="display:inline-block;transform:scaleY(1.14);transform-origin:50% 68%">2</span></div>
<div class="abs" style="left:1650.90px;top:630px;width:1px;height:32px;background:#ddd"></div>
<div class="tx" style="left:1651.40px;top:630.8px;width:32.30px;line-height:32px;text-align:center;color:#666;font-size:13px"><span style="display:inline-block;transform:scaleY(1.14);transform-origin:50% 68%">3</span></div>
<div class="abs" style="left:1683.20px;top:630px;width:1px;height:32px;background:#ddd"></div>
<div class="tx" style="left:1683.70px;top:630.8px;width:31.80px;line-height:32px;text-align:center;color:#666;font-size:13px"><span style="display:inline-block;transform:scaleY(1.14);transform-origin:50% 68%">4</span></div>
<div class="abs" style="left:1715.00px;top:630px;width:1px;height:32px;background:#ddd"></div>
<div class="tx" style="left:1715.50px;top:629.3px;width:64.10px;line-height:32px;text-align:center;color:#666;font-size:13px">下一页</div>
<div class="abs" style="left:1785px;top:630px;width:50px;height:31.5px;border:1px solid #d2d6de;background:#fff"></div>
<div class="tx" style="left:1840px;top:630px;width:50px;height:31.5px;border:1px solid #ddd;border-radius:3px;background:#f4f4f4;line-height:31.5px;text-align:center;color:#444;font-size:12px">跳转</div>
<div class="tx" style="left:1542px;top:50.5px;color:#1b6ec2;font-size:41px;line-height:50px;font-weight:bold;letter-spacing:5px">源码</div>
<svg class="abs" style="left:1557px;top:60px" width="26" height="26" viewBox="0 0 26 26"><path d="M2 24 Q3 10 12 4 Q17 1 21 3" fill="none" stroke="#f2b230" stroke-width="1.8"/></svg>
<div class="tx" style="left:1637px;top:56px;color:#595959;font-size:20px;line-height:24px;font-weight:bold;letter-spacing:9px">社区</div>
<div class="tx" style="left:1635px;top:78px;color:#3a84d0;font-size:16px;line-height:18px;letter-spacing:0.25px">C<span style="color:#f0b43a">O</span>MMUNITY</div>
<div class="tx" style="left:1539.5px;top:98px;color:#1b6ec2;font-family:'Liberation Serif',serif;font-weight:bold;font-size:20.5px;line-height:26px;letter-spacing:1.1px">www.shequym.com</div></body></html>
